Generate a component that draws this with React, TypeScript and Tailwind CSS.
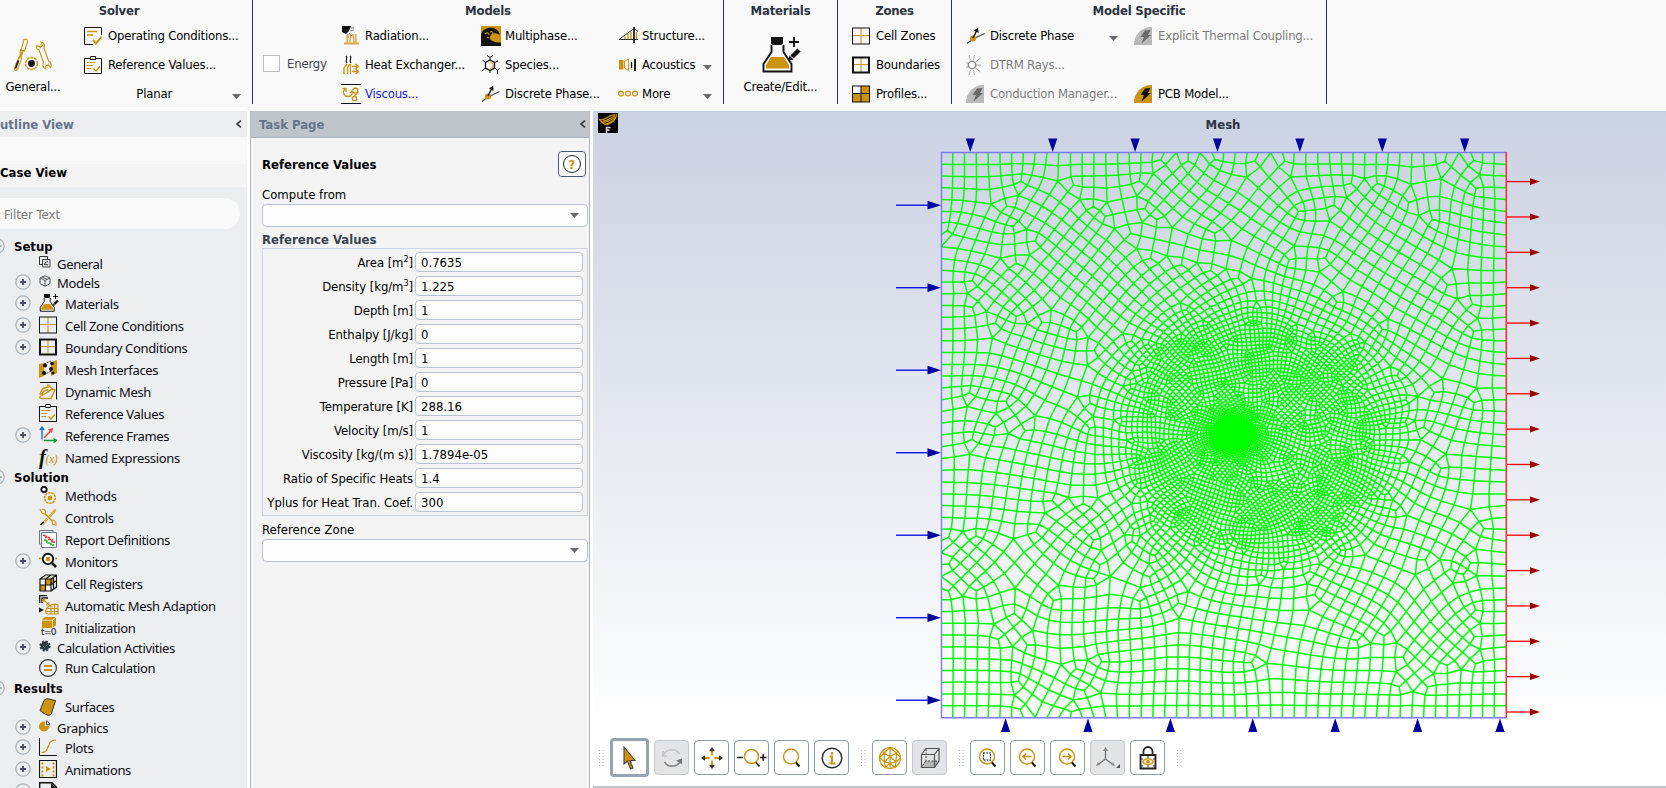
import { useMemo, type ReactNode } from "react";

const GOLD = "#cb930f";
const INK = "#111111";

/* ---------------------------------------------------------------- mesh -- */

type Pt = [number, number];

const X0 = 941;
const Y0 = 152.5;
const SIDE = 565;
const CX = 1257;
const CY = 437;

const LOBES: [number, number, number][] = [
  [1200, 374, 38],
  [1258, 362, 42],
  [1312, 384, 40],
  [1345, 425, 34],
  [1335, 470, 36],
  [1300, 505, 38],
  [1255, 507, 38],
  [1205, 495, 42],
  [1180, 452, 42],
  [1178, 410, 36],
  [1257, 437, 80],
];

const KNOTS: Pt[] = [
  [1202, 348],
  [1261, 350],
  [1251, 366],
  [1308, 376],
  [1340, 368],
  [1365, 425],
  [1345, 462],
  [1322, 492],
  [1268, 532],
  [1262, 512],
  [1300, 528],
  [1185, 514],
  [1160, 462],
  [1170, 375],
  [1228, 385],
];

const PATCHES: [number, number, number, number][] = [
  [1080, 235, 0.68, 85],
  [970, 250, 0.3, 34],
  [985, 275, 0.95, 34],
  [1010, 370, 0.3, 65],
  [960, 430, 0.12, 36],
  [1030, 440, 0.25, 45],
  [1020, 490, 0.08, 32],
  [1050, 545, 0.72, 55],
  [975, 545, 0.75, 30],
  [1060, 610, 0.06, 60],
  [990, 670, 0.0, 45],
  [1050, 690, 0.6, 32],
  [1130, 650, -0.2, 65],
  [1170, 600, -0.55, 40],
  [1250, 630, 0.18, 70],
  [1345, 600, 0.45, 50],
  [1430, 640, 0.76, 60],
  [1400, 540, 0.25, 45],
  [1460, 565, 0.5, 36],
  [1430, 470, 0.7, 42],
  [1470, 480, 0.08, 30],
  [1440, 400, 0.12, 40],
  [1430, 340, 0.5, 50],
  [1370, 250, -0.95, 70],
  [1460, 215, 0.05, 40],
  [1420, 220, 0.55, 30],
  [1285, 180, 0.7, 38],
  [1250, 220, 0.5, 50],
  [1200, 240, 0.1, 35],
  [1170, 190, 0.75, 35],
  [1290, 290, 0.3, 40],
  [1210, 280, 0.8, 36],
  [1480, 300, 0.1, 35],
  [1150, 300, 0.7, 50],
];

function cellSize(x: number, y: number): number {
  let d = Infinity;
  for (const [a, b, r] of LOBES) d = Math.min(d, Math.hypot(x - a, y - b) - r);
  let h = d <= 0 ? 4.1 : Math.min(11.8, 4.1 + d * 0.135);
  const e = Math.hypot((x - 1233) / 1.2, y - 434) - 18;
  h = Math.min(h, Math.max(2, 2 + e * 0.09));
  for (const [a, b] of KNOTS) h = Math.min(h, 2.6 + Math.hypot(x - a, y - b) * 0.12);
  return h;
}

function heading(x: number, y: number): number {
  let u = 0;
  let v = 0;
  const add = (a: number, w: number) => {
    u += w * Math.cos(4 * a);
    v += w * Math.sin(4 * a);
  };
  const edge = Math.min(x - X0, X0 + SIDE - x, y - Y0, Y0 + SIDE - y);
  add(0, 1.3 * Math.exp(-Math.max(0, edge) / 11));
  for (const [a, b, t, s] of PATCHES) {
    add(t, Math.exp(-((x - a) ** 2 + (y - b) ** 2) / (s * s)));
  }
  const r = Math.hypot(x - CX, y - CY);
  add(Math.atan2(y - CY, x - CX), 1.6 * Math.exp(-((r - 130) ** 2) / 1200));
  for (const [a, b, q] of LOBES) {
    const d = Math.hypot(x - a, y - b);
    if (d < q) add(Math.atan2(y - b, x - a), 0.6 * (1 - d / q));
  }
  return Math.atan2(v, u) / 4;
}

function seedPoints(rand: () => number): Pt[] {
  const pts: Pt[] = [];
  const n = 24;
  const s = SIDE / n;
  for (let i = 0; i < n; i++) {
    pts.push([X0 + i * s, Y0], [X0 + SIDE, Y0 + i * s]);
    pts.push([X0 + SIDE - i * s, Y0 + SIDE], [X0, Y0 + SIDE - i * s]);
  }
  const inside = (x: number, y: number, m: number) =>
    x > X0 + m && x < X0 + SIDE - m && y > Y0 + m && y < Y0 + SIDE - m;
  const tryAdd = (x: number, y: number) => {
    const h = 2 * cellSize(x, y);
    if (!inside(x, y, h * 0.6)) return;
    const lim = (h * 0.74) ** 2;
    for (const p of pts) if ((p[0] - x) ** 2 + (p[1] - y) ** 2 < lim) return;
    pts.push([x + (rand() - 0.5) * 0.05, y + (rand() - 0.5) * 0.05]);
  };
  tryAdd(1233, 434);
  for (const [a, b] of PATCHES) tryAdd(a, b);
  for (const [a, b] of LOBES) tryAdd(a, b);
  const queue = [...range(pts.length)].sort((a, b) => (a < 96 ? 1 : 0) - (b < 96 ? 1 : 0));
  let next = pts.length;
  for (let k = 0; k < queue.length; k++) {
    const [x, y] = pts[queue[k]];
    const t = heading(x, y);
    for (let q = 0; q < 4; q++) {
      const a = t + (q * Math.PI) / 2;
      let h = 2 * cellSize(x, y);
      h = (h + 2 * cellSize(x + h * Math.cos(a), y + h * Math.sin(a))) / 2;
      tryAdd(x + h * Math.cos(a), y + h * Math.sin(a));
    }
    while (next < pts.length) queue.push(next++);
  }
  return pts;
}

interface Tri {
  v: [number, number, number];
  cx: number;
  cy: number;
  r2: number;
}

function triangulate(input: Pt[]): [number, number, number][] {
  const n = input.length;
  const p: Pt[] = [...input, [-30000, -20000], [32000, -20000], [1200, 40000]];
  const make = (a: number, b: number, c: number): Tri => {
    const [ax, ay] = p[a];
    const bx = p[b][0] - ax;
    const by = p[b][1] - ay;
    const cx = p[c][0] - ax;
    const cy = p[c][1] - ay;
    const d = 2 * (bx * cy - by * cx) || 1e-9;
    const ux = (cy * (bx * bx + by * by) - by * (cx * cx + cy * cy)) / d;
    const uy = (bx * (cx * cx + cy * cy) - cx * (bx * bx + by * by)) / d;
    return { v: [a, b, c], cx: ux + ax, cy: uy + ay, r2: ux * ux + uy * uy };
  };
  let tris: Tri[] = [make(n, n + 1, n + 2)];
  for (let i = 0; i < n; i++) {
    const [x, y] = p[i];
    const keep: Tri[] = [];
    const rim = new Map<number, [number, number]>();
    for (const t of tris) {
      if ((x - t.cx) ** 2 + (y - t.cy) ** 2 < t.r2) {
        for (let e = 0; e < 3; e++) {
          const a = t.v[e];
          const b = t.v[(e + 1) % 3];
          const key = Math.min(a, b) * 100000 + Math.max(a, b);
          if (rim.has(key)) rim.delete(key);
          else rim.set(key, [a, b]);
        }
      } else keep.push(t);
    }
    for (const [a, b] of rim.values()) keep.push(make(a, b, i));
    tris = keep;
  }
  return tris
    .filter((t) => t.v.every((q) => q < n))
    .filter((t) => {
      const [a, b, c] = t.v.map((q) => p[q]);
      return Math.abs((b[0] - a[0]) * (c[1] - a[1]) - (b[1] - a[1]) * (c[0] - a[0])) > 0.5;
    })
    .map((t) => t.v);
}

function buildMesh(): string {
  let seed = 7;
  const rand = () => {
    seed = (seed * 16807) % 2147483647;
    return seed / 2147483647;
  };
  const pts = seedPoints(rand);
  const tris = triangulate(pts);
  const ekey = (a: number, b: number) => Math.min(a, b) * 100000 + Math.max(a, b);
  const owners = new Map<number, number[]>();
  tris.forEach((t, i) => {
    for (let e = 0; e < 3; e++) {
      const k = ekey(t[e], t[(e + 1) % 3]);
      const o = owners.get(k);
      if (o) o.push(i);
      else owners.set(k, [i]);
    }
  });
  const options: { q: number; t: number[]; poly: number[] }[] = [];
  owners.forEach((o, k) => {
    if (o.length !== 2) return;
    const a = Math.floor(k / 100000);
    const b = k % 100000;
    const c = tris[o[0]].find((v) => v !== a && v !== b)!;
    const d = tris[o[1]].find((v) => v !== a && v !== b)!;
    const poly = [a, c, b, d];
    let worst = 0;
    for (let i = 0; i < 4; i++) {
      const u = pts[poly[(i + 3) % 4]];
      const v = pts[poly[i]];
      const w = pts[poly[(i + 1) % 4]];
      const x1 = u[0] - v[0];
      const y1 = u[1] - v[1];
      const x2 = w[0] - v[0];
      const y2 = w[1] - v[1];
      worst = Math.max(worst, Math.abs((x1 * x2 + y1 * y2) / (Math.hypot(x1, y1) * Math.hypot(x2, y2))));
    }
    options.push({ q: worst, t: o, poly });
  });
  options.sort((a, b) => a.q - b.q);
  const used = new Set<number>();
  const faces: number[][] = [];
  for (const o of options) {
    if (o.q > 0.88 || used.has(o.t[0]) || used.has(o.t[1])) continue;
    used.add(o.t[0]);
    used.add(o.t[1]);
    faces.push(o.poly);
  }
  tris.forEach((t, i) => {
    if (!used.has(i)) faces.push([...t]);
  });

  const nodes: Pt[] = pts.map((q) => [q[0], q[1]]);
  const mids = new Map<number, number>();
  const links: [number, number][] = [];
  const mid = (a: number, b: number) => {
    const k = ekey(a, b);
    let m = mids.get(k);
    if (m === undefined) {
      m = nodes.length;
      nodes.push([(pts[a][0] + pts[b][0]) / 2, (pts[a][1] + pts[b][1]) / 2]);
      mids.set(k, m);
      links.push([a, m], [m, b]);
    }
    return m;
  };
  for (const f of faces) {
    const c = nodes.length;
    nodes.push([
      f.reduce((s, v) => s + pts[v][0], 0) / f.length,
      f.reduce((s, v) => s + pts[v][1], 0) / f.length,
    ]);
    f.forEach((v, i) => links.push([c, mid(v, f[(i + 1) % f.length])]));
  }
  const near: number[][] = nodes.map(() => []);
  for (const [a, b] of links) {
    near[a].push(b);
    near[b].push(a);
  }
  const fixed = nodes.map(
    ([x, y]) => x < X0 + 0.5 || x > X0 + SIDE - 0.5 || y < Y0 + 0.5 || y > Y0 + SIDE - 0.5,
  );
  for (let pass = 0; pass < 6; pass++) {
    nodes.forEach((q, i) => {
      if (fixed[i] || !near[i].length) return;
      let x = 0;
      let y = 0;
      for (const j of near[i]) {
        x += nodes[j][0];
        y += nodes[j][1];
      }
      q[0] = 0.3 * q[0] + (0.7 * x) / near[i].length;
      q[1] = 0.3 * q[1] + (0.7 * y) / near[i].length;
    });
  }
  return links
    .filter(([a, b]) => !(fixed[a] && fixed[b]))
    .map(
      ([a, b]) =>
        `M${nodes[a][0].toFixed(1)} ${nodes[a][1].toFixed(1)}L${nodes[b][0].toFixed(1)} ${nodes[b][1].toFixed(1)}`,
    )
    .join("");
}

function range(n: number): number[] {
  return Array.from({ length: n }, (_, i) => i);
}

function Scene() {
  const d = useMemo(buildMesh, []);
  return (
    <svg className="block h-[589px] w-[1073px] overflow-visible" viewBox="593 137 1073 589">
      <path d={d} stroke="#00ff00" strokeWidth="1.5" fill="none" />
      <ellipse cx="1233" cy="434" rx="24" ry="16.5" fill="#00ff00" />
      <ellipse cx="1233" cy="434" rx="21" ry="19" fill="#00ff00" />
      <path d="M941.5 718V152.5H1506M941 717.7H1506" stroke="#7b7bff" strokeWidth="1.4" fill="none" />
      <path d="M1506.3 152V718" stroke="#ff2a2a" strokeWidth="1.5" />
      {range(7).map((i) => {
        const x = 970.3 + i * 82.4;
        const xb = 1005.6 + i * 82.4;
        const y = 205.2 + i * 82.5;
        return (
          <g key={i} fill="#00009c">
            <path d={`M${x - 4.6} 138.5H${x + 4.6}L${x} 152Z`} />
            <path d={`M${xb - 4.6} 732H${xb + 4.6}L${xb} 718.3Z`} />
            <path d={`M927.5 ${y - 4.4}V${y + 4.4}L941 ${y}Z`} />
            <path d={`M896 ${y}H928`} stroke="#1010e8" strokeWidth="1.4" />
          </g>
        );
      })}
      {range(16).map((i) => {
        const y = 181.6 + i * 35.36;
        return (
          <g key={i}>
            <path d={`M1507 ${y}H1531`} stroke="#ff0000" strokeWidth="1.3" />
            <path d={`M1530 ${y - 3.4}V${y + 3.4}L1540 ${y}Z`} fill="#990000" />
          </g>
        );
      })}
    </svg>
  );
}

/* --------------------------------------------------------------- icons -- */

function Ico({ s = 18, w, vb, children }: { s?: number; w?: number; vb?: string; children: ReactNode }) {
  return (
    <svg className="block shrink-0" width={w ?? s} height={s} viewBox={vb ?? `0 0 ${w ?? s} ${s}`} fill="none">
      {children}
    </svg>
  );
}

const Conditions = () => (
  <Ico>
    <path d="M9 17.500H.5V.5h17V8" stroke={INK} />
    <path d="M3 4.500h10M3 8h6" stroke={GOLD} strokeWidth="1.400" />
    <path d="M9 13l3 3.500L17.500 10" stroke={GOLD} strokeWidth="2" />
  </Ico>
);
const Clipboard = () => (
  <Ico>
    <path d="M.5 2.500h17v15H.5z" stroke={INK} />
    <path d="M6.500.5h5v3h-5z" fill="#f9f9f9" stroke={INK} />
    <path d="M2.500 6.500h9M2.500 9.500h6M2.500 12.500h4.500" stroke={GOLD} />
    <path d="M9.500 12.500l2.500 2.500 4-4.500" stroke={GOLD} strokeWidth="1.300" />
  </Ico>
);
const Tools = () => (
  <Ico s={34} w={40}>
    <g stroke={GOLD} strokeWidth="1.100">
      <path d="M11 1.500c2-1 4 0 3.500 2l-3 9.500-3.500-1z M9.500 12.500l-4 9" />
      <path d="M7.500 12l2.500 1-2 6 .5 2-4 10.500c-1.500 1.500-3.500.5-3-1.500l4-10 1.500-1.500z" />
      <path d="M24 7.500l3.500 2 2-2-1.500-3.500c3 .5 4 3 3 6l4.500 13c2.500 1 3.500 4 2 6.500l-2-2.500-3 1 .500 3c-3-1-4-4-2.500-6.500l-4.500-13c-2 0-3-1.500-2-4z" />
      <circle cx="18.500" cy="25.500" r="6" strokeWidth="1.500" strokeDasharray="3 .77" />
    </g>
    <circle cx="18.500" cy="25.500" r="3.400" fill={INK} />
    <path d="M5.500 22.500l-3 8" stroke={INK} strokeWidth="1.700" />
  </Ico>
);
const Radiation = () => (
  <Ico s={20}>
    <path d="M1 0h9L8 5 5 8 1 6z" fill={INK} />
    <path d="M9 5l4-1M8 7l3 3M7 8v4M10 2l3 0" stroke="#777" />
    <path d="M6 9c0 3 1 4 0 8M9 8c1 3 0 5 0 9M12 8c0 3 1 5 1 9M15 8c-1 3 0 5 0 9" stroke="#e0ac50" strokeWidth="1.600" />
    <path d="M3 17.500h15" stroke="#dda84a" strokeWidth="2" />
  </Ico>
);
const HeatEx = () => (
  <Ico s={20}>
    <path d="M5 1c3 2-2 4 1 7M9 1c3 2-2 4 1 7" stroke={INK} strokeWidth="1.200" />
    <path d="M3 19v-6l3-4M6.500 19v-6l2-4M9.500 19V9" stroke={GOLD} strokeWidth="1.300" />
    <path d="M11 11.500h6M11 16.500h6M14.500 9l3 2.500-3 2.500M14.500 14l3 2.500-3 2.500" stroke={GOLD} strokeWidth="1.300" />
  </Ico>
);
const Viscous = () => (
  <Ico s={20}>
    <path d="M0 .5h20M0 19.500h20" stroke={INK} />
    <g stroke={GOLD} strokeWidth="1.300">
      <path d="M4 5c-3 3-1 7.500 3 7.500 3 0 4.500-2 4-4.500M1.500 4.500h3.500v3.500M9 9l2-2 2 2" />
      <path d="M12 6.500c0-3 5-3 5 0 0 2-2 3-4 2.500M17 7c0 2-2 4-4 4.500" />
      <circle cx="13.500" cy="14.500" r="2.200" />
    </g>
  </Ico>
);
const Wave = () => (
  <Ico s={20}>
    <path d="M0 0h20v20H0z" fill={GOLD} />
    <path d="M0 20V8C2 3 7 1 12 2c5 1 7 5 6.500 7L16 7.500c-3-1-6 0-7 3-1 4 4 6 11 6V20z" fill={INK} />
    <path d="M4 8c2-2 4-1 4 1M9 6c2-1 3 0 3 2M6 11l2 1" stroke={GOLD} strokeWidth="1.200" />
  </Ico>
);
const Species = () => (
  <Ico s={20}>
    <path d="M9 5l4.500 2.500v5.500L9 15.500 4.500 13V7.500z" stroke={INK} strokeWidth="1.300" />
    <path d="M9 7l3 1.500v4L9 13.500" stroke={GOLD} />
    <path d="M9 5V2.500L6 .5M9 2.500l3-2M13.500 7.500L17 6M4.500 7.500L1.500 5M4.500 13L1 16M13.500 13l3 2 2-1.500M16.500 15v4M9 15.500V18" stroke={INK} />
  </Ico>
);
const Discrete = () => (
  <Ico s={20}>
    <path d="M1 17.500L7 13 18.500 7.500" stroke="#444" strokeWidth="1.200" />
    <circle cx="7" cy="12.500" r="3" fill={GOLD} />
    <path d="M7 12L11 4" stroke={INK} strokeWidth="1.400" />
    <path d="M8 4.500L12.200 1.500l.3 5.500z" fill={INK} />
  </Ico>
);
const Structure = () => (
  <Ico s={20}>
    <path d="M1 13.500L16 2.500M1 13.500h19" stroke="#333" />
    <path d="M7 10v3M10 8v5M13 6v7M18.500 6v7" stroke={GOLD} strokeWidth="1.300" />
    <path d="M16 1v16" stroke={INK} strokeWidth="1.700" />
    <path d="M16 2.500l4 3" stroke="#333" />
  </Ico>
);
const Acoustics = () => (
  <Ico s={20}>
    <path d="M1 5h4.500v9.500H1z" fill={GOLD} />
    <path d="M6.500 6.500L10.500 4v11.500l-4-2.500z" stroke={GOLD} />
    <path d="M13.500 7v6" stroke={INK} strokeWidth="1.400" />
    <path d="M17 4v12" stroke={INK} strokeWidth="1.900" />
  </Ico>
);
const More = () => (
  <Ico s={20}>
    <g stroke={GOLD} strokeWidth="1.300">
      <circle cx="3" cy="9.500" r="2.400" />
      <circle cx="10" cy="9.500" r="2.400" />
      <circle cx="17" cy="9.500" r="2.400" />
    </g>
  </Ico>
);
const Flask = ({ s = 36, w = 40 }: { s?: number; w?: number }) => (
  <Ico s={s} w={w} vb="0 0 40 36">
    <path d="M10 0h12v6.500l-2 1.500h-8l-2-1.500z" fill={INK} />
    <path d="M10.500 8v7L2.500 27v7.500h28V27l-8-12V8" stroke={INK} strokeWidth="1.900" />
    <path d="M10 20h13l5 8v3.500H5V28z" fill={GOLD} />
    <path d="M28 5h10M33 0v10" stroke={INK} strokeWidth="1.900" />
    <path d="M31 20l7-7" stroke={INK} strokeWidth="4.500" />
    <path d="M27.500 23.500l1-5 4 4z" fill={INK} />
  </Ico>
);
const Cells = ({ t = 1, fill = false }: { t?: number; fill?: boolean }) => (
  <Ico>
    {fill && <path d="M9 1h8v8H9zM1 9h16v8H1z" fill={GOLD} />}
    <path d="M9 1v16M1 8.500h16" stroke={fill ? INK : GOLD} />
    <rect x={t / 2} y={t / 2 + 0.5} width={18 - t} height={17 - t} stroke={INK} strokeWidth={t} />
  </Ico>
);
const Bolt = ({ on = false }: { on?: boolean }) => (
  <Ico>
    <path d="M0 18C0 8 7 0 18 0v18z" fill={on ? GOLD : "#b9b9b9"} />
    <path d="M11 3.500l5.500-.5-2.500 5h3L7.500 16.500l2.500-6.500H6.500z" fill={on ? INK : "#6a6a6a"} />
  </Ico>
);
const Rays = () => (
  <Ico s={20}>
    <circle cx="6" cy="10" r="3.700" stroke="#888" strokeWidth="1.400" />
    <path d="M3 0l1.500 5M8.500 0L7.500 5M14.500 3L9.500 7M15 10h-5M14.500 17l-5-4M8.500 20l-1-5M3 20l1.500-5M0 8h2M0 12h2" stroke="#aaa" />
  </Ico>
);

const Caret = ({ c = "" }: { c?: string }) => (
  <svg className={`block shrink-0 ${c}`} width="9" height="5" viewBox="0 0 9 5">
    <path d="M0 0h9L4.500 5z" fill="#666a70" />
  </svg>
);

/* ---- tree icons ---- */

const TGeneral = () => (
  <Ico s={12}>
    <path d="M3 8.500H.5V.5h8V3" stroke="#333" />
    <path d="M3.500 3.500h7.500V11H3.500z" stroke="#444" fill="#dfe1e3" />
    <path d="M5.500 9c0-2 1-3 3.500-3.500M6 8l3 1" stroke="#333" />
  </Ico>
);
const TModels = () => (
  <Ico s={12}>
    <path d="M6 .7L11 3v5.500L6 11.300 1 8.500V3zM1 3l5 2.500L11 3M6 5.500v5.500M3 2l5.500 2.500" stroke="#555" />
  </Ico>
);
const TInterfaces = () => (
  <Ico>
    <path d="M0 4l5-1v13l-5 2zM12 2l6-2v13l-6 3z" fill={GOLD} />
    <path d="M5 4l7-3M5 15l7-4" stroke="#333" strokeDasharray="2 1" />
    <g fill={INK}>
      <circle cx="6" cy="5.500" r="2" />
      <circle cx="5" cy="13" r="2" />
      <circle cx="13" cy="3.500" r="1.800" />
      <circle cx="12" cy="9" r="2" />
      <circle cx="14" cy="13" r="1.500" />
    </g>
  </Ico>
);
const TDynamic = () => (
  <Ico>
    <path d="M1 .5h17.500M17.500 1v16.500" stroke={INK} />
    <path d="M1 12C2 8 5 5 9 5V3l4 3.500L9 10V8C6 8 4 9 3 12zM3 16.500c-3 0-3-2 0-3L12 8c4-2 5 0 3 2l-3 6.500z" stroke={GOLD} strokeWidth="1.300" />
  </Ico>
);
const TFrames = () => (
  <Ico>
    <path d="M3 13.500V2M1 4l2-3 2 3" stroke="#0b7dc4" strokeWidth="1.400" />
    <path d="M5 14.500h11M14.500 12.500l3 2-3 2" stroke="#0a9a3c" strokeWidth="1.400" />
    <path d="M5 12L12.500 4" stroke="#ef4a44" strokeWidth="1.600" />
    <path d="M9 3.500L14 2l-1 5z" fill="#ef4a44" />
  </Ico>
);
const TFx = () => (
  <div className="flex h-[18px] w-[19px] items-center font-['Liberation_Serif',serif] italic leading-none tracking-[-0.5px]">
    <span className="text-[21px] font-bold text-[#111]">f</span>
    <span className="pt-1 text-[12px] text-[#cb930f]">(x)</span>
  </div>
);
const TMethods = () => (
  <Ico>
    <circle cx="5" cy="3.500" r="2.700" stroke={INK} strokeWidth="1.800" />
    <circle cx="11" cy="12" r="5.300" stroke={GOLD} strokeWidth="1.500" strokeDasharray="2.500 .7" />
    <circle cx="11" cy="12" r="2.400" fill={GOLD} />
  </Ico>
);
const TControls = () => (
  <Ico>
    <path d="M1 1l2 4 3 1 7 7 .5 3 4 1.500M16.500 1L10 8M8 10l-6 6.500M3 1c3 0 4 2 3.500 4.500l6 6.500c3 0 5 2 4.500 4.500M17 2.500L11 9M9 11L4 16.500" stroke={GOLD} strokeWidth="1.100" />
    <path d="M4.500 14l-3 3" stroke={INK} strokeWidth="1.500" />
  </Ico>
);
const TReport = () => (
  <Ico>
    <path d="M14 2.500V.5H.5v13.500H2.500" stroke="#6b7b8c" />
    <path d="M2.500 2.500h15v15h-15z" fill="#fff" stroke="#6b7b8c" />
    <path d="M4 5.500h3v2h3v2h3v2.500h3" stroke="#e8202a" strokeWidth="1.700" strokeDasharray="2.500 .7" />
    <path d="M5 10h3v3h4v2h3" stroke="#16b32a" strokeWidth="1.700" strokeDasharray="2.500 .7" />
  </Ico>
);
const TMonitors = () => (
  <Ico>
    <circle cx="9" cy="7" r="5.200" stroke={INK} strokeWidth="1.900" fill="#fff" />
    <path d="M13 11l4 4" stroke={INK} strokeWidth="2.500" />
    <path d="M7 5h4v4H7z" fill={GOLD} />
    <path d="M0 6.500h2.500M16 6.500h2" stroke={GOLD} strokeWidth="1.300" />
  </Ico>
);
const TRegisters = () => (
  <Ico>
    <path d="M1 5h11v12H1z" fill="#fff" />
    <path d="M1 5l5.500-4h11L12 5z" fill="#f5e8c8" />
    <path d="M1 11h5.500v6H1zM6.500 5H12v6H6.500zM12 5l3-2v5.500l-3 2z" fill={GOLD} />
    <path d="M1 5h11v12H1zM1 5l5.500-4h11L12 5M17.500 1v12L12 17M6.500 5v12M1 11h11l5.500-4.500M6.500 5L12 1M14.500 3v12" stroke={INK} strokeWidth="1.200" />
  </Ico>
);
const TAdapt = () => (
  <Ico s={20}>
    <path d="M.7 8V.7h7.500M3 8V3h6" stroke={INK} strokeWidth="1.300" />
    <path d="M0 12.500l5 2.500-5 2.500z" fill={INK} />
    <path d="M4 4l5 5M4 4h3M4 4v3M10 10V7M10 10H7" stroke={GOLD} strokeWidth="1.200" />
    <path d="M8 13c2-3 8-5 11-3v9H9c-3 0-3-3-1-6zM12 10v9M15.500 9v10M8 13.500h11M7 16.500h12" stroke={GOLD} strokeWidth="1.200" />
  </Ico>
);
const TInit = () => (
  <div className="flex h-[20px] w-[19px] flex-col items-center">
    <svg width="14" height="11" viewBox="0 0 14 11" className="shrink-0">
      <path d="M0 3.500h10V11H0zM0 2.800L3 0h10.500l-3 2.800zM10.700 3.500L14 .5V8l-3.300 3z" fill={GOLD} />
    </svg>
    <span className="font-['DejaVu_Sans',sans-serif] text-[9px] leading-[9px] tracking-[-0.6px] text-[#111]">t=0</span>
  </div>
);
const TCalc = () => (
  <Ico s={12}>
    <circle cx="6" cy="6" r="4.400" fill="#2f3a42" />
    <circle cx="6" cy="6" r="4.800" stroke="#2f3a42" strokeWidth="1.600" strokeDasharray="2.200 1.570" />
    <path d="M4 6l1.500 1.500L8.500 4.500" stroke="#5b6670" />
  </Ico>
);
const TRun = () => (
  <Ico>
    <circle cx="9" cy="9" r="8.400" stroke="#222" strokeWidth="1.100" />
    <path d="M5 7h8M5 11h8" stroke={GOLD} strokeWidth="1.900" />
  </Ico>
);
const TSurface = () => (
  <Ico>
    <path d="M5 2.500C8-1 12 2 16.500 2.500L12.500 15.500C10 19 7 17 1 12.500z" fill={GOLD} stroke="#333" />
  </Ico>
);
const TGraphics = () => (
  <Ico s={12}>
    <circle cx="5" cy="6.500" r="5" fill={GOLD} />
    <path d="M6 0v6h5.500C11.500 3 9 .5 6 0z" fill="#eceef0" />
    <path d="M7.500.8v4h3.500C10.500 3 9.500 1.500 7.500.8z" stroke="#444" />
  </Ico>
);
const TPlots = () => (
  <Ico>
    <path d="M.5 0v17.500H18" stroke={INK} />
    <path d="M2.500 14.500C12 15 6 2 17 2" stroke={GOLD} strokeWidth="1.200" />
  </Ico>
);
const TAnim = () => (
  <Ico>
    <path d="M.5.500h17v17H.5z" stroke={INK} strokeWidth="1.200" />
    <path d="M3.500 2.500v14M14.500 2.500v14" stroke={GOLD} strokeWidth="1.900" strokeDasharray="2 2" />
    <path d="M7 6l5 3-5 3z" fill={GOLD} />
  </Ico>
);
const TDoc = () => (
  <Ico>
    <path d="M.7 18V.7H13l4.500 4.500V18" stroke={INK} strokeWidth="1.400" />
    <path d="M12 1v5h5z" fill={INK} />
  </Ico>
);

/* -------------------------------------------------------------- ribbon -- */

const UI = "font-['DejaVu_Sans_Condensed','DejaVu_Sans',sans-serif]";

function Item({ icon, text, tone = "text-black" }: { icon: ReactNode; text: string; tone?: string }) {
  return (
    <div className="flex h-[29px] items-center">
      <div className="w-6 shrink-0">{icon}</div>
      <span className={`whitespace-nowrap ${tone}`}>{text}</span>
    </div>
  );
}

function Group({ title, w, children }: { title: string; w: string; children: ReactNode }) {
  return (
    <section className={`flex h-[104px] shrink-0 flex-col border-r border-[#2b3644] ${w}`}>
      <h2 className="h-[21px] text-center text-[13px] font-bold leading-[21px] text-[#2b3440]">{title}</h2>
      <div className="flex h-[83px]">{children}</div>
    </section>
  );
}

const DIM = "text-[#7d7d7d]";

function Ribbon() {
  return (
    <header className="flex h-[108px] shrink-0 bg-[#f9f9f9] text-[13px] tracking-[-0.2px]">
      <Group title="Solver" w="w-[253px] [&>h2]:pr-[14px]">
        <div className="flex w-[84px] shrink-0 flex-col items-center pr-[18px] pt-[17px]">
          <Tools />
          <span className="mt-[5px] leading-5">General...</span>
        </div>
        <div className="w-[168px]">
          <Item icon={<Conditions />} text="Operating Conditions..." />
          <Item icon={<Clipboard />} text="Reference Values..." />
          <div className="flex h-[29px] items-center justify-end pr-[11px]">
            <span className="mr-[60px]">Planar</span>
            <Caret c="mt-[6px]" />
          </div>
        </div>
      </Group>
      <Group title="Models" w="w-[471px]">
        <div className="flex w-[88px] shrink-0 items-center pb-[2px] pl-[10px] pt-1">
          <span className="block size-[17px] border border-[#bdbdbd] bg-white" />
          <span className="ml-[7px] pt-px text-[#3f4650]">Energy</span>
        </div>
        <div className="w-[140px] shrink-0">
          <Item icon={<Radiation />} text="Radiation..." />
          <Item icon={<HeatEx />} text="Heat Exchanger..." />
          <Item icon={<Viscous />} text="Viscous..." tone="text-[#1a1ae6]" />
        </div>
        <div className="w-[137px] shrink-0">
          <Item icon={<Wave />} text="Multiphase..." />
          <Item icon={<Species />} text="Species..." />
          <Item icon={<Discrete />} text="Discrete Phase..." />
        </div>
        <div className="w-[85px] shrink-0">
          <Item icon={<Structure />} text="Structure..." />
          <Item icon={<Acoustics />} text="Acoustics" />
          <Item icon={<More />} text="More" />
        </div>
        <div className="flex flex-col gap-6 pt-[44px]">
          <Caret />
          <Caret />
        </div>
      </Group>
      <Group title="Materials" w="w-[114px]">
        <div className="flex w-full flex-col items-center pt-4">
          <Flask />
          <span className="mt-1 leading-5">Create/Edit...</span>
        </div>
      </Group>
      <Group title="Zones" w="w-[114px]">
        <div className="pl-[14px]">
          <Item icon={<Cells />} text="Cell Zones" />
          <Item icon={<Cells t={2} />} text="Boundaries" />
          <Item icon={<Cells fill />} text="Profiles..." />
        </div>
      </Group>
      <Group title="Model Specific" w="w-[375px]">
        <div className="w-[157px] shrink-0 pl-[14px]">
          <Item icon={<Discrete />} text="Discrete Phase" />
          <Item icon={<Rays />} text="DTRM Rays..." tone={DIM} />
          <Item icon={<Bolt />} text="Conduction Manager..." tone={DIM} />
        </div>
        <Caret c="mt-[15px]" />
        <div className="ml-4">
          <Item icon={<Bolt />} text="Explicit Thermal Coupling..." tone={DIM} />
          <div className="h-[29px]" />
          <Item icon={<Bolt on />} text="PCB Model..." />
        </div>
      </Group>
    </header>
  );
}

/* ------------------------------------------------------------- outline -- */

interface Row {
  h: string;
  text: string;
  icon?: ReactNode;
  small?: boolean;
  plus?: boolean;
  head?: boolean;
}

const ROWS: Row[] = [
  { h: "h-[18px]", text: "Setup", head: true },
  { h: "h-[18px]", text: "General", icon: <TGeneral />, small: true },
  { h: "h-[20px]", text: "Models", icon: <TModels />, small: true, plus: true },
  { h: "h-[22px]", text: "Materials", icon: <Flask s={18} w={20} />, plus: true },
  { h: "h-[22px]", text: "Cell Zone Conditions", icon: <Cells />, plus: true },
  { h: "h-[22px]", text: "Boundary Conditions", icon: <Cells t={2} />, plus: true },
  { h: "h-[22px]", text: "Mesh Interfaces", icon: <TInterfaces /> },
  { h: "h-[22px]", text: "Dynamic Mesh", icon: <TDynamic /> },
  { h: "h-[22px]", text: "Reference Values", icon: <Clipboard /> },
  { h: "h-[22px]", text: "Reference Frames", icon: <TFrames />, plus: true },
  { h: "h-[22px]", text: "Named Expressions", icon: <TFx /> },
  { h: "h-[16px]", text: "Solution", head: true },
  { h: "h-[22px]", text: "Methods", icon: <TMethods /> },
  { h: "h-[22px]", text: "Controls", icon: <TControls /> },
  { h: "h-[22px]", text: "Report Definitions", icon: <TReport /> },
  { h: "h-[22px]", text: "Monitors", icon: <TMonitors />, plus: true },
  { h: "h-[22px]", text: "Cell Registers", icon: <TRegisters /> },
  { h: "h-[22px]", text: "Automatic Mesh Adaption", icon: <TAdapt /> },
  { h: "h-[22px]", text: "Initialization", icon: <TInit /> },
  { h: "h-[18px]", text: "Calculation Activities", icon: <TCalc />, small: true, plus: true },
  { h: "h-[23px]", text: "Run Calculation", icon: <TRun /> },
  { h: "h-[16px]", text: "Results", head: true },
  { h: "h-[23px]", text: "Surfaces", icon: <TSurface /> },
  { h: "h-[18px]", text: "Graphics", icon: <TGraphics />, small: true, plus: true },
  { h: "h-[22px]", text: "Plots", icon: <TPlots />, plus: true },
  { h: "h-[22px]", text: "Animations", icon: <TAnim />, plus: true },
  { h: "h-[22px]", text: "", icon: <TDoc />, plus: true },
];

const Expander = ({ minus = false }: { minus?: boolean }) => (
  <Ico s={16}>
    <circle cx="8" cy="8" r="7.200" stroke="#aab5bd" strokeWidth="1.300" />
    <path d={minus ? "M8 8h4.500" : "M5 8h6M8 5v6"} stroke={minus ? "#9aa5ad" : "#4a5365"} strokeWidth="1.900" />
  </Ico>
);

function TreeRow({ r }: { r: Row }) {
  if (r.head) {
    return (
      <div className={`flex shrink-0 items-center ${r.h}`}>
        <div className="-ml-[11px] mr-[9px]">
          <Expander minus />
        </div>
        <span className={`${UI} text-[13px] font-bold leading-none tracking-normal text-black`}>{r.text}</span>
      </div>
    );
  }
  return (
    <div className={`flex shrink-0 items-center pl-[15px] ${r.h}`}>
      <div className="w-6 shrink-0 pb-[2px]">{r.plus && <Expander />}</div>
      <div className={r.small ? "w-[18px] shrink-0 pb-1" : "w-[26px] shrink-0 pb-[2px]"}>{r.icon}</div>
      <span className="whitespace-nowrap leading-none">{r.text}</span>
    </div>
  );
}

const Chevron = () => (
  <svg width="6" height="8" viewBox="0 0 6 8" fill="none">
    <path d="M5 .7L1 4l4 3.300" stroke="#333" strokeWidth="1.500" />
  </svg>
);

function Outline() {
  return (
    <aside className="flex w-[247px] shrink-0 flex-col overflow-hidden bg-[#eceef0]">
      <div className="flex h-[26px] shrink-0 items-center justify-between pr-[5px] text-[13px] font-bold text-[#66758a]">
        <span className="pt-[2px]">utline View</span>
        <Chevron />
      </div>
      <div className="h-[27px] shrink-0 bg-[#f9f9f9]" />
      <div className="flex h-[23px] shrink-0 items-start bg-[#f4f4f4] text-[13px] font-bold leading-[17px]">Case View</div>
      <div className="mt-[11px] flex h-[31px] w-[240px] shrink-0 items-center rounded-r-full bg-[#fafafa] pl-1 pt-[2px] text-[13px] text-[#7a7a7a]">
        Filter Text
      </div>
      <div className="mt-2 flex flex-col font-['Noto_Sans',sans-serif] text-[13px] tracking-[-0.33px] text-[#0d0d12]">
        {ROWS.map((r, i) => (
          <TreeRow key={i} r={r} />
        ))}
      </div>
    </aside>
  );
}

/* ----------------------------------------------------------- task page -- */

const FIELDS: [ReactNode, string][] = [
  [<>Area [m<sup className="text-[9px]">2</sup>]</>, "0.7635"],
  [<>Density [kg/m<sup className="text-[9px]">3</sup>]</>, "1.225"],
  ["Depth [m]", "1"],
  ["Enthalpy [J/kg]", "0"],
  ["Length [m]", "1"],
  ["Pressure [Pa]", "0"],
  ["Temperature [K]", "288.16"],
  ["Velocity [m/s]", "1"],
  ["Viscosity [kg/(m s)]", "1.7894e-05"],
  ["Ratio of Specific Heats", "1.4"],
  ["Yplus for Heat Tran. Coef.", "300"],
];

const Select = () => (
  <div className="flex h-[23px] w-[326px] items-center justify-end rounded-[4px] border border-[#b9c3d3] bg-[#fdfdfd] pr-2">
    <Caret />
  </div>
);

function TaskPage() {
  return (
    <section className="ml-[3px] flex w-[340px] shrink-0 flex-col border-x border-[#b5b8bb] bg-[#f4f4f4] text-[13px]">
      <div className="flex h-[27px] shrink-0 items-center justify-between border-b border-[#b0b4b8] bg-[#bfc5cb] pl-2 pr-[3px] font-bold text-[#66758a]">
        <span className="pt-[2px]">Task Page</span>
        <Chevron />
      </div>
      <div className="flex flex-col pl-[11px]">
        <div className="mt-[13px] flex h-[26px] w-[324px] items-center justify-between">
          <h3 className="pt-[2px] font-bold">Reference Values</h3>
          <div className="flex h-[26px] w-[28px] items-center justify-center rounded-[4px] border border-[#4f5b6b] bg-[#fdfdfd]">
            <span className="flex size-[18px] items-center justify-center rounded-full border border-[#222] text-[13px] font-bold leading-none text-[#cb930f]">
              ?
            </span>
          </div>
        </div>
        <div className="mt-[8px] h-[19px] leading-[19px]">Compute from</div>
        <Select />
        <div className="mt-[3px] h-[18px] font-bold leading-[20px] text-[#3a424d]">Reference Values</div>
        <div className="flex w-[326px] flex-col gap-1 border border-[#ced5e2] py-[3px] pr-1">
          {FIELDS.map(([label, value], i) => (
            <div key={i} className="flex h-5 items-center justify-end">
              <span className="mr-[2px] whitespace-nowrap leading-none tracking-[-0.08px]">{label}</span>
              <div className="flex h-5 w-[168px] shrink-0 items-center rounded-[4px] border border-[#b9c3d3] bg-[#fdfdfd] pl-[5px] leading-none">
                {value}
              </div>
            </div>
          ))}
        </div>
        <div className="mt-[3px] h-[20px] leading-[22px]">Reference Zone</div>
        <Select />
      </div>
    </section>
  );
}

/* ------------------------------------------------------------- toolbar -- */

const Grip = ({ c }: { c: string }) => (
  <svg className={`shrink-0 ${c}`} width="5" height="16" viewBox="0 0 5 16">
    <path d="M.5 0v16M4 0v16" stroke="#b9b9b9" strokeDasharray="1 2" />
  </svg>
);

function Tool({ children, off = false, on = false }: { children: ReactNode; off?: boolean; on?: boolean }) {
  const look = on
    ? "h-[39px] w-[39px] border-[3px] border-[#97a5b0] bg-white"
    : off
      ? "h-[35px] w-[35px] border border-[#c4c8d0] bg-[#e3e4e8]"
      : "h-[35px] w-[35px] border border-[#8e9ba8] bg-white";
  return <div className={`flex shrink-0 items-center justify-center rounded-[4px] ${look}`}>{children}</div>;
}

const Lens = ({ children }: { children?: ReactNode }) => (
  <Ico s={22}>
    <circle cx="10" cy="9.500" r="7.500" stroke={GOLD} strokeWidth="1.400" />
    <path d="M15 15.500l3.500 4" stroke={INK} strokeWidth="1.900" />
    {children}
  </Ico>
);

function Toolbar() {
  return (
    <div className="flex h-[60px] shrink-0 items-center pt-[3px]">
      <Grip c="ml-[6px] mr-[6px]" />
      <Tool on>
        <Ico s={24} w={16}>
          <path d="M2 1v17l3.500-3 3 8 2.500-1-3-7.500h5z" fill={GOLD} stroke="#444" strokeWidth="1.100" />
        </Ico>
      </Tool>
      <div className="ml-[5px] flex gap-[5px]">
        <Tool off>
          <Ico s={22}>
            <path d="M2 9a9 8.500 0 0 1 16.500-2M2 4v5h4" stroke="#c5c5c7" strokeWidth="1.700" />
            <path d="M20 12.500a9 8.500 0 0 1-16.500 2.500" stroke="#8a8a8c" strokeWidth="1.700" />
            <path d="M15 13.500l6-2v6z" fill="#777" />
          </Ico>
        </Tool>
        <Tool>
          <Ico s={22}>
            <path d="M11 3.500v5M11 13.500v5M3.500 11h5M13.500 11h5" stroke={GOLD} strokeWidth="1.800" />
            <path d="M11 0l2.800 4H8.200zM11 22l2.800-4H8.200zM0 11l4-2.800v5.600zM22 11l-4-2.800v5.600z" fill="#333" />
          </Ico>
        </Tool>
        <Tool>
          <Ico s={22} w={30}>
            <circle cx="14.500" cy="9.500" r="7" stroke={GOLD} strokeWidth="1.500" />
            <path d="M0 10.500h6M23 10.500h6.500M26.200 7.300v6.500M19 15.500l3.500 4" stroke="#222" strokeWidth="1.700" />
          </Ico>
        </Tool>
        <Tool>
          <Lens />
        </Tool>
        <Tool>
          <Ico s={22}>
            <circle cx="11" cy="11" r="9.800" stroke="#333" strokeWidth="1.500" />
            <path d="M11 5v2.500M8.500 9.500H11v7M8.500 16.500h5.500" stroke={GOLD} strokeWidth="2" />
          </Ico>
        </Tool>
      </div>
      <Grip c="ml-[12px] mr-[6px]" />
      <div className="flex gap-[5px]">
        <Tool>
          <Ico s={24}>
            <g stroke={GOLD} strokeWidth="1.200">
              <circle cx="12" cy="12" r="10.500" />
              <path d="M12 1.500L6 7l6 3.500L18.500 7zM6 7L1.500 12l5 4L12 10.500l6 5.500 4.500-4-4-5M6.500 16l1 5.500L12 17l5 4.500 1-5.500M6.500 16L12 17l6-1M12 10.500V17M6 7l.5 9M18.500 7L18 16M12 1.500v9M4 5l2 2M20 5l-1.500 2M12 17v5.500" />
            </g>
          </Ico>
        </Tool>
        <Tool off>
          <Ico s={22}>
            <path d="M2 20l4.500-6H20l-4.500 6z" fill="#b5b5b5" />
            <path d="M2.500 7.500h13v13h-13zM2.500 7.500L7 1.500h13v12.500l-4.500 6.500M15.500 7.500L20 1.500" stroke="#555" strokeWidth="1.200" />
            <path d="M7 2v12h13M7 14l-4.500 6" stroke="#444" strokeDasharray="2 1.500" />
          </Ico>
        </Tool>
      </div>
      <Grip c="ml-[12px] mr-[6px]" />
      <div className="flex gap-[5px]">
        <Tool>
          <Lens>
            <path d="M6.500 6h7v7h-7z" stroke={INK} strokeWidth="1.200" strokeDasharray="1.700 1" />
          </Lens>
        </Tool>
        <Tool>
          <Lens>
            <path d="M6 9.500h8.500M9 6.500l-3 3 3 3" stroke={GOLD} strokeWidth="1.700" />
          </Lens>
        </Tool>
        <Tool>
          <Lens>
            <path d="M5.500 9.500h8.500M11 6.500l3 3-3 3" stroke={GOLD} strokeWidth="1.700" />
          </Lens>
        </Tool>
        <Tool off>
          <Ico s={24} w={26}>
            <path d="M10.500 3v10L3 18.500M10.500 13l7.500 5.500" stroke="#777" strokeWidth="1.400" />
            <path d="M10.500 1l2.500 4H8zM1 20l2-4 2 3zM20 20l-4-1 2-3z" fill="#8a8a8a" />
            <path d="M25 18v4h-4z" fill="#555" />
          </Ico>
        </Tool>
        <Tool>
          <Ico s={24} w={18}>
            <path d="M4.500 9V5.500a4.500 4.500 0 0 1 9 0V9" stroke="#222" strokeWidth="1.800" />
            <path d="M1.500 9h15v13.500h-15z" stroke="#222" strokeWidth="1.800" />
            <path d="M9 10v2M9 19.500v2M3 12v2M15 12v2M3 19v2M15 19v2" stroke="#222" />
            <path d="M3.500 15.700c3-4 8-4 11 0-3 4-8 4-11 0z" stroke={GOLD} strokeWidth="1.300" />
            <circle cx="9" cy="15.700" r="2" fill={GOLD} />
          </Ico>
        </Tool>
      </div>
      <Grip c="ml-[12px]" />
    </div>
  );
}

const Logo = () => (
  <svg className="shrink-0" width="20" height="20" viewBox="0 0 20 20" fill="none">
    <path d="M0 0h20v20H0z" fill="#000" />
    <path d="M1 6.500c3 1.500 5 0 8-2 3-2 7-3 9.500-2.500 0 4-4 8-8.500 9.500-3 1-5-1-8.500-5M4 9c5 1 9-2 14-5M5 8c4 0 7-3 12-5M7 11c5 0 8-3 11-6" stroke={GOLD} strokeWidth="1.200" />
    <path d="M8.500 20v-5.500h4M8.500 17h3" stroke="#ddd" strokeWidth="1.400" />
  </svg>
);

export default function App() {
  return (
    <div className={`flex h-[788px] w-[1666px] flex-col overflow-hidden bg-white text-black ${UI}`}>
      <Ribbon />
      <div className="mt-[3px] flex h-[677px]">
        <Outline />
        <TaskPage />
        <main className="ml-[3px] flex w-[1073px] flex-col">
          <div className="h-[615px] shrink-0 bg-linear-to-b from-[#cbd2e2] to-white">
            <div className="flex h-[26px] items-start pl-[5px] pt-[2px]">
              <Logo />
              <span className="w-full pl-[162px] text-center text-[13px] font-bold leading-[24px] text-[#2b3440]">Mesh</span>
            </div>
            <Scene />
          </div>
          <Toolbar />
          <div className="h-[2px] bg-[#bcc4cc]" />
        </main>
      </div>
    </div>
  );
}
